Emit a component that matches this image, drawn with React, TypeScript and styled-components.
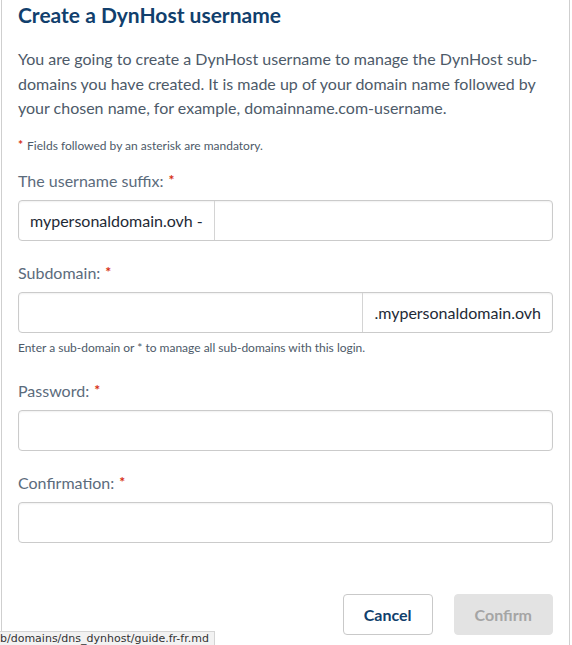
import React from "react";
import styled, { createGlobalStyle } from "styled-components";

const Global = createGlobalStyle`
  html, body {
    margin: 0;
    padding: 0;
    background: #fff;
  }
  body {
    font-family: Lato, "Noto Sans", sans-serif;
  }
`;

const Modal = styled.div`
  box-sizing: border-box;
  width: 569px;
  height: 645px;
  border-left: 1px solid #cfcfcf;
  border-right: 1px solid #cfcfcf;
  margin-left: 1px;
  padding: 2px 16px 0 16px;
  display: flex;
  flex-direction: column;
`;

const Title = styled.h2`
  margin: 0;
  font-size: 21px;
  line-height: 26px;
  font-weight: 700;
  color: #113f6d;
`;

const Intro = styled.p`
  margin: 19px 0 0;
  font-size: 16px;
  line-height: 24.5px;
  color: #4d5a69;
`;

const Note = styled.p`
  margin: 16px 0 0;
  font-size: 12px;
  line-height: 16px;
  color: #4d5a69;
`;

const Star = styled.span<{ $lead?: boolean }>`
  color: #d62d12;
  font-size: ${(p) => (p.$lead ? "12px" : "14px")};
  font-weight: 700;
  vertical-align: ${(p) => (p.$lead ? "1px" : "2px")};
  margin-left: ${(p) => (p.$lead ? "0" : "5px")};
  margin-right: ${(p) => (p.$lead ? "4px" : "0")};
`;

const Field = styled.div<{ $top: number }>`
  margin-top: ${(p) => p.$top}px;
  display: flex;
  flex-direction: column;
`;

const Label = styled.label`
  font-size: 16px;
  line-height: 20px;
  color: #5b6b7c;
  margin-bottom: 9px;
`;

const Group = styled.div`
  display: flex;
  height: 41px;
  box-sizing: border-box;
  border: 1px solid #cbcbcb;
  border-radius: 4px;
  box-shadow: inset 0 1px 2px rgba(0, 0, 0, 0.06);
  overflow: hidden;
  width: 535px;
`;

const Input = styled.input`
  flex: 1;
  min-width: 0;
  border: none;
  outline: none;
  background: transparent;
  font: inherit;
  padding: 0 12px;
`;

const Addon = styled.span<{ $side: "left" | "right" }>`
  display: flex;
  align-items: center;
  padding: 0 11px;
  font-size: 16px;
  color: #1e2a36;
  white-space: nowrap;
  ${(p) =>
    p.$side === "left"
      ? "border-right: 1px solid #d4d4d4;"
      : "border-left: 1px solid #d4d4d4;"}
`;

const Help = styled.div`
  margin-top: 7px;
  font-size: 12px;
  line-height: 16px;
  color: #4d5a69;
`;

const Actions = styled.div`
  margin-top: auto;
  margin-bottom: 10px;
  display: flex;
  justify-content: flex-end;
  gap: 21px;
  padding-right: 1px;
  width: 535px;
`;

const Button = styled.button<{ $primary?: boolean }>`
  height: 41px;
  box-sizing: border-box;
  border-radius: 4px;
  font-family: inherit;
  font-size: 16px;
  font-weight: 700;
  padding: 0 20px;
  border: 1px solid ${(p) => (p.$primary ? "#e3e3e3" : "#c9c9c9")};
  background: ${(p) => (p.$primary ? "#e3e3e3" : "#fff")};
  color: ${(p) => (p.$primary ? "#a5a5a5" : "#113f6d")};
`;

const Status = styled.div`
  position: fixed;
  left: 0;
  bottom: 0;
  height: 13px;
  padding: 0 5px 0 0;
  background: #f2f2f2;
  border: 1px solid #d4d4d4;
  border-left: none;
  border-bottom: none;
  font-family: "DejaVu Sans", sans-serif;
  font-size: 11px;
  line-height: 14px;
  color: #333;
  overflow: hidden;
`;

export default function App() {
  return (
    <>
      <Global />
      <Modal>
        <Title>Create a DynHost username</Title>
        <Intro>
          You are going to create a DynHost username to manage the DynHost sub-domains you have
          created. It is made up of your domain name followed by your chosen name, for example,
          domainname.com-username.
        </Intro>
        <Note>
          <Star $lead>*</Star>Fields followed by an asterisk are mandatory.
        </Note>

        <Field $top={16}>
          <Label>
            The username suffix:<Star>*</Star>
          </Label>
          <Group>
            <Addon $side="left">mypersonaldomain.ovh -</Addon>
            <Input />
          </Group>
        </Field>

        <Field $top={21}>
          <Label>
            Subdomain:<Star>*</Star>
          </Label>
          <Group>
            <Input />
            <Addon $side="right">.mypersonaldomain.ovh</Addon>
          </Group>
          <Help>Enter a sub-domain or * to manage all sub-domains with this login.</Help>
        </Field>

        <Field $top={24}>
          <Label>
            Password:<Star>*</Star>
          </Label>
          <Group>
            <Input type="password" />
          </Group>
        </Field>

        <Field $top={21}>
          <Label>
            Confirmation:<Star>*</Star>
          </Label>
          <Group>
            <Input type="password" />
          </Group>
        </Field>

        <Actions>
          <Button>Cancel</Button>
          <Button $primary>Confirm</Button>
        </Actions>
      </Modal>
      <Status>b/domains/dns_dynhost/guide.fr-fr.md</Status>
    </>
  );
}
